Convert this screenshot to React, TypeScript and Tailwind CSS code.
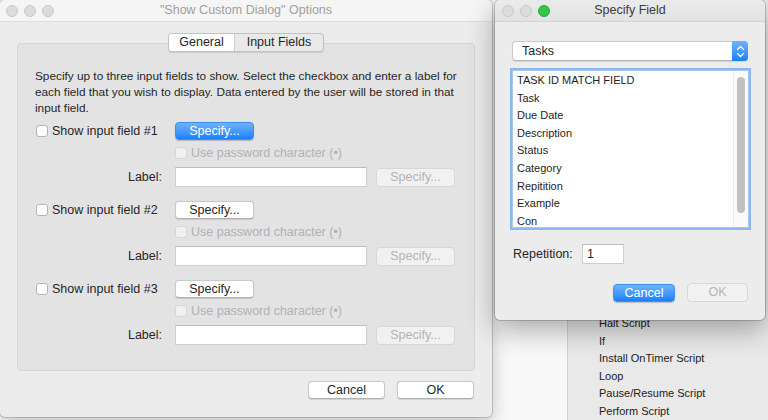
import React from "react";

function Lights({ active }: { active?: boolean }) {
  return (
    <div className="flex items-center gap-[6px]">
      <span className="w-[12px] h-[12px] rounded-full bg-[#dcdcdc] border border-[#c8c8c8]" />
      <span className="w-[12px] h-[12px] rounded-full bg-[#dcdcdc] border border-[#c8c8c8]" />
      {active ? (
        <span className="w-[12px] h-[12px] rounded-full bg-[#33c748] border border-[#26a935]" />
      ) : (
        <span className="w-[12px] h-[12px] rounded-full bg-[#dcdcdc] border border-[#c8c8c8]" />
      )}
    </div>
  );
}

function BlueButton({ children, w }: { children: React.ReactNode; w: string }) {
  return (
    <div
      className={`${w} h-[18px] rounded-[4px] bg-gradient-to-b from-[#6cb3fa] to-[#1580fb] border border-[#3d8ff0] text-white text-[12.5px] leading-none flex items-center justify-center shadow-[0_0.5px_1px_rgba(0,0,0,0.2)]`}
    >
      {children}
    </div>
  );
}

function WhiteButton({ children, w }: { children: React.ReactNode; w: string }) {
  return (
    <div
      className={`${w} h-[18px] rounded-[4px] bg-white border border-[#c9c9c9] border-b-[#b0b0b0] text-[#262626] text-[12.5px] leading-none flex items-center justify-center shadow-[0_0.5px_1px_rgba(0,0,0,0.12)]`}
    >
      {children}
    </div>
  );
}

function DisabledButton({ children, w }: { children: React.ReactNode; w: string }) {
  return (
    <div
      className={`${w} h-[19px] rounded-[4px] bg-[#f1f1f1] border border-[#d8d8d8] text-[#b4b4b4] text-[12.5px] leading-none flex items-center justify-center`}
    >
      {children}
    </div>
  );
}

function FieldGroup({ n, first }: { n: number; first?: boolean }) {
  return (
    <div className={first ? "mt-[6px]" : "mt-[14px]"}>
      <div className="flex items-center h-[18px]">
        <div className="w-[140px] flex items-center">
          <span className="ml-[1px] w-[12px] h-[12px] rounded-[3px] bg-white border border-[#b3b3b3]" />
          <span className="ml-[4px] text-[12.5px] leading-none">Show input field #{n}</span>
        </div>
        {first ? <BlueButton w="w-[79px]">Specify...</BlueButton> : <WhiteButton w="w-[79px]">Specify...</WhiteButton>}
      </div>
      <div className="mt-[5px] h-[16px] flex items-center pl-[140px]">
        <span className="w-[12px] h-[12px] rounded-[3px] bg-[#f0f0f0] border border-[#d6d6d6]" />
        <span className="ml-[4px] text-[12.5px] leading-none text-[#b2b2b2]">Use password character (•)</span>
      </div>
      <div className="mt-[6px] h-[20px] flex items-center">
        <div className="w-[127px] text-right text-[12.5px] leading-none">Label:</div>
        <div className="ml-[13px] w-[192px] h-[20px] bg-white border border-[#cfcfcf] border-t-[#bdbdbd]" />
        <div className="ml-[9px]">
          <DisabledButton w="w-[79px]">Specify...</DisabledButton>
        </div>
      </div>
    </div>
  );
}

const listItems = [
  "TASK ID MATCH FIELD",
  "Task",
  "Due Date",
  "Description",
  "Status",
  "Category",
  "Repitition",
  "Example",
  "Con",
];

const bgItems = ["Halt Script", "If", "Install OnTimer Script", "Loop", "Pause/Resume Script", "Perform Script"];

export default function App() {
  return (
    <div className="relative w-[768px] h-[420px] overflow-hidden bg-[#f8f8f8] font-['Liberation_Sans',Arial,sans-serif] text-[#262626]">
      {/* background window */}
      <div className="absolute left-[567px] top-0 w-[201px] h-[420px] bg-[#e9e9e9] border-l border-[#d2d2d2]">
        <div className="pl-[31px] pt-[315px] flex flex-col">
          {bgItems.map((t) => (
            <div key={t} className="text-[11px] leading-[17.6px] text-[#222]">
              {t}
            </div>
          ))}
        </div>
      </div>

      {/* left dialog */}
      <div className="absolute left-0 top-0 w-[492px] h-[417px] rounded-[5px] bg-[#ececec] shadow-[0_0_0_1px_rgba(0,0,0,0.16),0_6px_18px_rgba(0,0,0,0.22)] flex flex-col">
        <div className="relative h-[22px] rounded-t-[5px] bg-[#f5f5f5] border-b border-[#dedede] flex items-center pl-[6px]">
          <Lights />
          <div className="absolute inset-0 flex items-center justify-center text-[12.5px] text-[#a0a0a0]">
            "Show Custom Dialog" Options
          </div>
        </div>
        <div className="px-[17px] pt-[11px]">
          <div className="relative z-10 flex justify-center">
            <div className="flex h-[19px] rounded-[4px] border border-[#c2c2c2] bg-[#e9e9e9] overflow-hidden shadow-[0_0.5px_1px_rgba(0,0,0,0.1)]">
              <div className="w-[66px] bg-white flex items-center justify-center text-[12.5px] leading-none border-r border-[#d0d0d0]">
                General
              </div>
              <div className="w-[88px] flex items-center justify-center text-[12.5px] leading-none">Input Fields</div>
            </div>
          </div>
          <div className="-mt-[9px] h-[328px] rounded-[4px] bg-[#e3e3e3] border border-[#d6d6d6] pl-[17px] pt-[24px]">
            <div className="text-[11.8px] leading-[16px] whitespace-nowrap">
              Specify up to three input fields to show. Select the checkbox and enter a label for
              <br />
              each field that you wish to display. Data entered by the user will be stored in that
              <br />
              input field.
            </div>
            <FieldGroup n={1} first />
            <FieldGroup n={2} />
            <FieldGroup n={3} />
          </div>
          <div className="mt-[10px] flex justify-end gap-[12px] pr-[1px]">
            <WhiteButton w="w-[77px]">Cancel</WhiteButton>
            <WhiteButton w="w-[77px]">OK</WhiteButton>
          </div>
        </div>
      </div>

      {/* specify field dialog */}
      <div className="absolute left-[495px] top-0 w-[270px] h-[320px] rounded-[5px] bg-[#ececec] shadow-[0_0_0_1px_rgba(0,0,0,0.18),0_10px_28px_rgba(0,0,0,0.32)] flex flex-col">
        <div className="relative h-[22px] rounded-t-[5px] bg-gradient-to-b from-[#ebebeb] to-[#e2e2e2] border-b border-[#d3d3d3] flex items-center pl-[7px]">
          <Lights active />
          <div className="absolute inset-0 flex items-center justify-center text-[12.5px] text-[#3a3a3a]">
            Specify Field
          </div>
        </div>
        <div className="px-[17px]">
          <div className="mt-[19px] h-[20px] rounded-[4px] bg-white border border-[#cacaca] border-b-[#b5b5b5] flex items-center shadow-[0_0.5px_1px_rgba(0,0,0,0.1)]">
            <div className="flex-1 pl-[9px] text-[12.5px] leading-none">Tasks</div>
            <div className="w-[16px] h-[20px] -mr-px -my-px rounded-r-[4px] bg-gradient-to-b from-[#6cb3fa] to-[#1580fb] flex items-center justify-center">
              <svg width="9" height="13" viewBox="0 0 9 13" fill="none" stroke="white" strokeWidth="1.4" strokeLinecap="round" strokeLinejoin="round">
                <path d="M1.5 4.5 L4.5 1.5 L7.5 4.5" />
                <path d="M1.5 8.5 L4.5 11.5 L7.5 8.5" />
              </svg>
            </div>
          </div>
          <div className="relative mt-[9px] w-[237px] h-[158px] bg-white border border-[#a9c6ee] shadow-[0_0_0_2px_#8cb8f2] overflow-hidden">
            <div className="pl-[4px] pt-[1px]">
              {listItems.map((t) => (
                <div key={t} className="text-[11px] leading-[17.6px] text-[#1e1e1e] whitespace-nowrap">
                  {t}
                </div>
              ))}
            </div>
            <div className="absolute right-0 top-0 bottom-0 w-[15px] bg-[#fafafa] border-l border-[#ededed]">
              <div className="ml-[3px] mt-[6px] w-[8px] h-[136px] rounded-full bg-[#c1c1c1]" />
            </div>
          </div>
          <div className="mt-[16px] h-[20px] flex items-center">
            <div className="pl-[1px] w-[70px] text-[12.5px] leading-none">Repetition:</div>
            <div className="w-[42px] h-[20px] bg-white border border-[#cfcfcf] border-t-[#bdbdbd] flex items-center pl-[4px] text-[12.5px]">
              1
            </div>
          </div>
          <div className="mt-[20px] flex justify-end gap-[12px]">
            <BlueButton w="w-[62px]">Cancel</BlueButton>
            <div className="-mt-px">
              <DisabledButton w="w-[61px]">OK</DisabledButton>
            </div>
          </div>
        </div>
      </div>
    </div>
  );
}
